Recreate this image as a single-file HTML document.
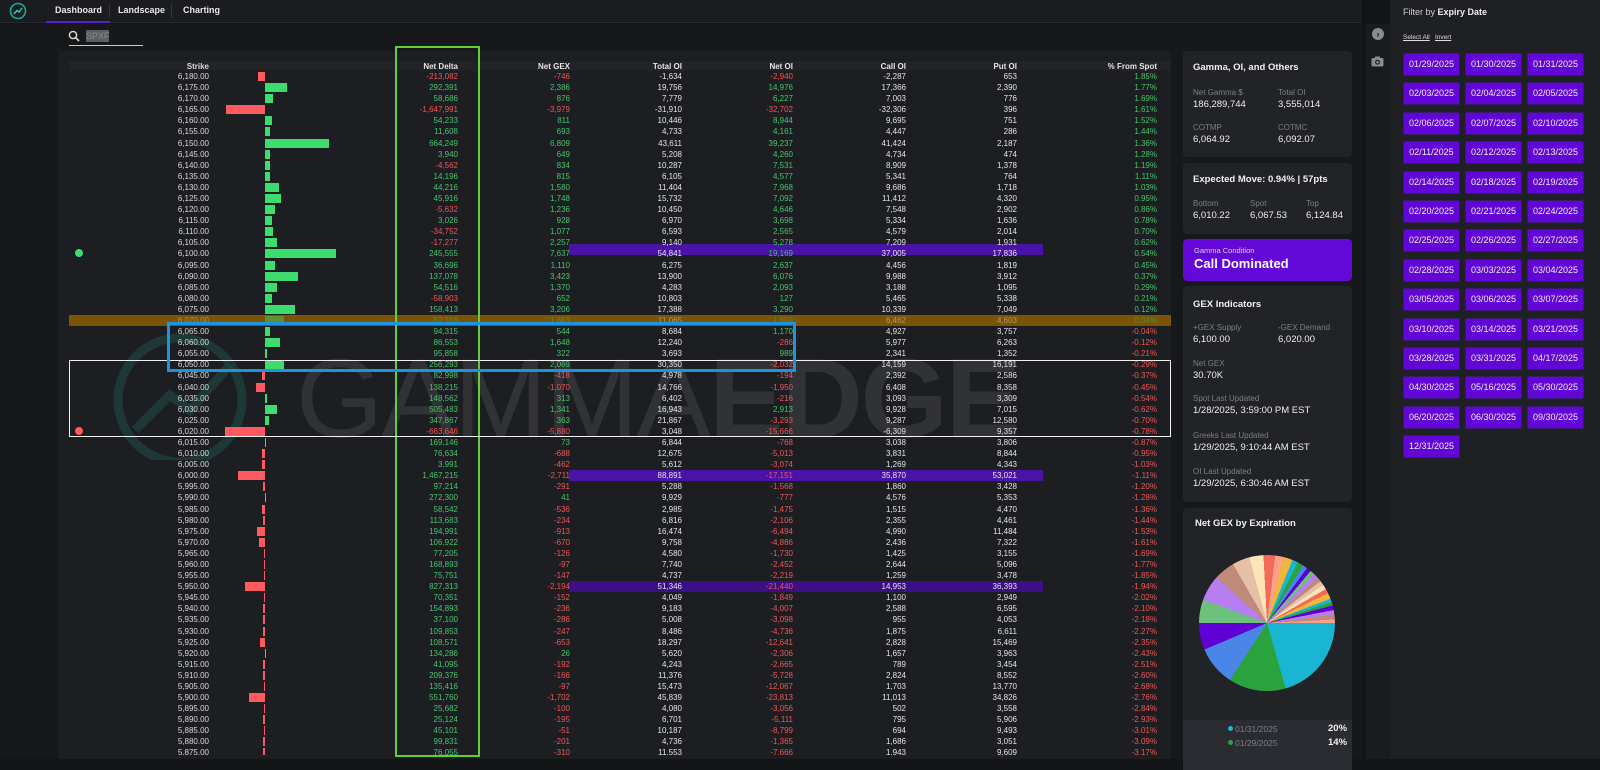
<!DOCTYPE html>
<html><head><meta charset="utf-8"><style>
*{margin:0;padding:0;box-sizing:border-box}
body{width:1600px;height:759px;overflow:hidden;background:#131416;font-family:"Liberation Sans",sans-serif;color:#e6e6e6;position:relative}
.abs{position:absolute}
#nav{left:0;top:0;width:1362px;height:23px;background:#1b1c1f;border-bottom:1px solid #2a2b2f}
#nav span{position:absolute;top:5px;font-size:9px;font-weight:bold;color:#e8e8e8}
#side{left:0;top:24px;width:46px;height:735px;background:#17181b}
#main{left:46px;top:24px;width:1316px;height:735px;background:#17181a}
#panel{left:59px;top:51px;width:1112px;height:708px;background:#1d1e22}
.r{position:absolute;left:0;width:1600px;height:11.09px;font-size:8px;line-height:11px}
.r a{position:absolute;text-align:right;color:#e4e4e4;width:100px}
.r a:nth-of-type(1){left:109px;color:#d8d8d8}
.r a:nth-of-type(2){left:358px}
.r a:nth-of-type(3){left:470px}
.r a:nth-of-type(4){left:582px}
.r a:nth-of-type(5){left:693px}
.r a:nth-of-type(6){left:806px}
.r a:nth-of-type(7){left:917px}
.r a:nth-of-type(8){left:1057px}
.r a.n{color:#f05656}.r a.p{color:#42c66a}
.r u{position:absolute;left:265px;top:1px;height:9px;background:#3ddc6f}
.r u.n{background:#ff5a5f;transform:translateX(-100%)}
.r i{position:absolute;top:0;height:11.09px}
.card{position:absolute;left:1183px;width:169px;background:#222327;border-radius:4px}
.lb{position:absolute;font-size:8px;color:#7d7f86}
.vl{position:absolute;font-size:9.5px;color:#eee}
.ct{position:absolute;font-size:9.5px;font-weight:bold;color:#f0f0f0}
#filt{left:1390px;top:0;width:210px;height:759px;background:#1f2023}
.btn{position:absolute;width:57px;height:23px;background:#6106d6;border:1px solid #3a1a70;border-radius:2px;color:#f2ecff;font-size:9px;line-height:21px;text-align:center}
</style></head><body>
<div id="nav" class="abs">
<svg class="abs" style="left:9px;top:2px" width="18" height="18" viewBox="0 0 18 18"><circle cx="9" cy="9" r="7.5" fill="none" stroke="#17a89a" stroke-width="1.6"/><path d="M5 12 L8 8.5 L10 10 L13 6" fill="none" stroke="#35d0c0" stroke-width="1.4"/></svg>
<span style="left:55px">Dashboard</span>
<div class="abs" style="left:109px;top:4px;width:1px;height:14px;background:#34353a"></div>
<span style="left:118px">Landscape</span>
<div class="abs" style="left:171px;top:4px;width:1px;height:14px;background:#34353a"></div>
<span style="left:183px">Charting</span>
<div class="abs" style="left:46px;top:21px;width:64px;height:2px;background:#5a1fd0"></div>
</div>
<div id="side" class="abs"></div>
<div id="main" class="abs"></div>
<svg class="abs" style="left:68px;top:30px" width="12" height="12" viewBox="0 0 12 12"><circle cx="5" cy="5" r="3.6" fill="none" stroke="#ddd" stroke-width="1.4"/><path d="M7.6 7.6L11 11" stroke="#ddd" stroke-width="1.6"/></svg>
<div class="abs" style="left:86px;top:30px;width:23px;height:12px;background:#5b5d63;font-size:9px;color:#8a8c92;line-height:12px">SPXF</div>
<div class="abs" style="left:69px;top:45px;width:74px;height:1px;background:#ccc"></div>
<div id="panel" class="abs"></div>
<div class="abs" style="left:69px;top:61px;width:1102px;height:10px;background:#222327"></div>
<!-- watermark -->
<svg class="abs" style="left:90px;top:330px" width="180" height="130" viewBox="0 0 180 130"><circle cx="90" cy="70" r="62" fill="none" stroke="#1f4a48" stroke-width="9" opacity=".6"/><path d="M45 100 L80 65 L100 80 L140 35" fill="none" stroke="#1f4a48" stroke-width="9" opacity=".6"/></svg>
<div class="abs" style="left:296px;top:343px;font-size:112px;line-height:112px;color:rgba(255,255,255,.09);letter-spacing:-2px;white-space:nowrap"><span style="font-weight:normal">GAMMA</span><span style="font-weight:bold">EDGE</span></div>
<!-- header -->
<div class="r" style="top:61px;font-weight:bold"><a>Strike</a><a>Net Delta</a><a>Net GEX</a><a>Total OI</a><a>Net OI</a><a>Call OI</a><a>Put OI</a><a>% From Spot</a></div>
<!-- highlights -->
<div class="abs" style="left:569px;top:243.5px;width:474px;height:11px;background:#4a12a6"></div>
<div class="abs" style="left:69px;top:315px;width:1102px;height:11px;background:#7a5504"></div>
<div class="abs" style="left:569px;top:470.2px;width:474px;height:11px;background:#4a12a6"></div>
<div class="abs" style="left:569px;top:581.1px;width:474px;height:11px;background:#3c0f86"></div>
<div id="rows" class="abs" style="left:0;top:71px;width:1600px">
<div class="r" style="top:0px"><a>6,180.00</a><u class="n" style="width:7px"></u><a class="n">-213,082</a><a class="n">-746</a><a>-1,634</a><a class="n">-2,940</a><a>-2,287</a><a>653</a><a class="p">1.85%</a></div>
<div class="r" style="top:11.09px"><a>6,175.00</a><u style="width:22px"></u><a class="p">292,391</a><a class="p">2,386</a><a>19,756</a><a class="p">14,976</a><a>17,366</a><a>2,390</a><a class="p">1.77%</a></div>
<div class="r" style="top:22.18px"><a>6,170.00</a><u style="width:8px"></u><a class="p">58,686</a><a class="p">876</a><a>7,779</a><a class="p">6,227</a><a>7,003</a><a>776</a><a class="p">1.69%</a></div>
<div class="r" style="top:33.27px"><a>6,165.00</a><u class="n" style="width:39px"></u><a class="n">-1,647,991</a><a class="n">-3,979</a><a>-31,910</a><a class="n">-32,702</a><a>-32,306</a><a>396</a><a class="p">1.61%</a></div>
<div class="r" style="top:44.36px"><a>6,160.00</a><u style="width:7px"></u><a class="p">54,233</a><a class="p">811</a><a>10,446</a><a class="p">8,944</a><a>9,695</a><a>751</a><a class="p">1.52%</a></div>
<div class="r" style="top:55.45px"><a>6,155.00</a><u style="width:5px"></u><a class="p">11,608</a><a class="p">693</a><a>4,733</a><a class="p">4,161</a><a>4,447</a><a>286</a><a class="p">1.44%</a></div>
<div class="r" style="top:66.54px"><a>6,150.00</a><u style="width:64px"></u><a class="p">664,249</a><a class="p">6,809</a><a>43,611</a><a class="p">39,237</a><a>41,424</a><a>2,187</a><a class="p">1.36%</a></div>
<div class="r" style="top:77.63px"><a>6,145.00</a><u style="width:5px"></u><a class="p">3,940</a><a class="p">649</a><a>5,208</a><a class="p">4,260</a><a>4,734</a><a>474</a><a class="p">1.28%</a></div>
<div class="r" style="top:88.72px"><a>6,140.00</a><u style="width:5px"></u><a class="n">-4,562</a><a class="p">834</a><a>10,287</a><a class="p">7,531</a><a>8,909</a><a>1,378</a><a class="p">1.19%</a></div>
<div class="r" style="top:99.81px"><a>6,135.00</a><u style="width:5px"></u><a class="p">14,196</a><a class="p">815</a><a>6,105</a><a class="p">4,577</a><a>5,341</a><a>764</a><a class="p">1.11%</a></div>
<div class="r" style="top:110.9px"><a>6,130.00</a><u style="width:14px"></u><a class="p">44,216</a><a class="p">1,580</a><a>11,404</a><a class="p">7,968</a><a>9,686</a><a>1,718</a><a class="p">1.03%</a></div>
<div class="r" style="top:121.99px"><a>6,125.00</a><u style="width:16px"></u><a class="p">45,916</a><a class="p">1,748</a><a>15,732</a><a class="p">7,092</a><a>11,412</a><a>4,320</a><a class="p">0.95%</a></div>
<div class="r" style="top:133.08px"><a>6,120.00</a><u style="width:10px"></u><a class="n">-5,632</a><a class="p">1,236</a><a>10,450</a><a class="p">4,646</a><a>7,548</a><a>2,902</a><a class="p">0.86%</a></div>
<div class="r" style="top:144.17px"><a>6,115.00</a><u style="width:7px"></u><a class="p">3,026</a><a class="p">928</a><a>6,970</a><a class="p">3,698</a><a>5,334</a><a>1,636</a><a class="p">0.78%</a></div>
<div class="r" style="top:155.26px"><a>6,110.00</a><u style="width:8px"></u><a class="n">-34,752</a><a class="p">1,077</a><a>6,593</a><a class="p">2,565</a><a>4,579</a><a>2,014</a><a class="p">0.70%</a></div>
<div class="r" style="top:166.35px"><a>6,105.00</a><u style="width:12px"></u><a class="n">-17,277</a><a class="p">2,257</a><a>9,140</a><a class="p">5,278</a><a>7,209</a><a>1,931</a><a class="p">0.62%</a></div>
<div class="r" style="top:177.44px"><a>6,100.00</a><u style="width:71px"></u><a class="p">245,555</a><a class="p">7,637</a><a>54,841</a><a class="p">19,169</a><a>37,005</a><a>17,836</a><a class="p">0.54%</a></div>
<div class="r" style="top:188.53px"><a>6,095.00</a><u style="width:10px"></u><a class="p">36,696</a><a class="p">1,110</a><a>6,275</a><a class="p">2,637</a><a>4,456</a><a>1,819</a><a class="p">0.45%</a></div>
<div class="r" style="top:199.62px"><a>6,090.00</a><u style="width:33px"></u><a class="p">137,078</a><a class="p">3,423</a><a>13,900</a><a class="p">6,076</a><a>9,988</a><a>3,912</a><a class="p">0.37%</a></div>
<div class="r" style="top:210.71px"><a>6,085.00</a><u style="width:12px"></u><a class="p">54,516</a><a class="p">1,370</a><a>4,283</a><a class="p">2,093</a><a>3,188</a><a>1,095</a><a class="p">0.29%</a></div>
<div class="r" style="top:221.8px"><a>6,080.00</a><u style="width:7px"></u><a class="n">-58,903</a><a class="p">652</a><a>10,803</a><a class="p">127</a><a>5,465</a><a>5,338</a><a class="p">0.21%</a></div>
<div class="r" style="top:232.89px"><a>6,075.00</a><u style="width:30px"></u><a class="p">158,413</a><a class="p">3,206</a><a>17,388</a><a class="p">3,290</a><a>10,339</a><a>7,049</a><a class="p">0.12%</a></div>
<div class="r" style="top:243.98px;opacity:.45"><a>6,070.00</a><u style="width:19px"></u><a class="p">62,316</a><a class="p">1,863</a><a>11,065</a><a class="p">1,859</a><a style="opacity:2">6,462</a><a>4,603</a><a class="p">0.04%</a></div>
<div class="r" style="top:255.07px"><a>6,065.00</a><u style="width:5px"></u><a class="p">94,315</a><a class="p">544</a><a>8,684</a><a class="p">1,170</a><a>4,927</a><a>3,757</a><a class="n">-0.04%</a></div>
<div class="r" style="top:266.16px"><a>6,060.00</a><u style="width:15px"></u><a class="p">86,553</a><a class="p">1,648</a><a>12,240</a><a class="n">-286</a><a>5,977</a><a>6,263</a><a class="n">-0.12%</a></div>
<div class="r" style="top:277.25px"><a>6,055.00</a><u style="width:2px"></u><a class="p">95,858</a><a class="p">322</a><a>3,693</a><a class="p">989</a><a>2,341</a><a>1,352</a><a class="n">-0.21%</a></div>
<div class="r" style="top:288.34px"><a>6,050.00</a><u style="width:19px"></u><a class="p">256,293</a><a class="p">2,069</a><a>30,350</a><a class="n">-2,032</a><a>14,159</a><a>16,191</a><a class="n">-0.29%</a></div>
<div class="r" style="top:299.43px"><a>6,045.00</a><u class="n" style="width:3px"></u><a class="p">82,998</a><a class="n">-418</a><a>4,978</a><a class="n">-194</a><a>2,392</a><a>2,586</a><a class="n">-0.37%</a></div>
<div class="r" style="top:310.52px"><a>6,040.00</a><u class="n" style="width:9px"></u><a class="p">138,215</a><a class="n">-1,070</a><a>14,766</a><a class="n">-1,950</a><a>6,408</a><a>8,358</a><a class="n">-0.45%</a></div>
<div class="r" style="top:321.61px"><a>6,035.00</a><u style="width:2px"></u><a class="p">148,562</a><a class="p">313</a><a>6,402</a><a class="n">-216</a><a>3,093</a><a>3,309</a><a class="n">-0.54%</a></div>
<div class="r" style="top:332.7px"><a>6,030.00</a><u style="width:12px"></u><a class="p">505,483</a><a class="p">1,341</a><a>16,943</a><a class="p">2,913</a><a>9,928</a><a>7,015</a><a class="n">-0.62%</a></div>
<div class="r" style="top:343.79px"><a>6,025.00</a><u style="width:4px"></u><a class="p">347,867</a><a class="p">363</a><a>21,867</a><a class="n">-3,293</a><a>9,287</a><a>12,580</a><a class="n">-0.70%</a></div>
<div class="r" style="top:354.88px"><a>6,020.00</a><u class="n" style="width:40px"></u><a class="n">-663,646</a><a class="n">-5,880</a><a>3,048</a><a class="n">-15,666</a><a>-6,309</a><a>9,357</a><a class="n">-0.78%</a></div>
<div class="r" style="top:365.97px"><a>6,015.00</a><u style="width:1px"></u><a class="p">169,146</a><a class="p">73</a><a>6,844</a><a class="n">-768</a><a>3,038</a><a>3,806</a><a class="n">-0.87%</a></div>
<div class="r" style="top:377.06px"><a>6,010.00</a><u class="n" style="width:3px"></u><a class="p">76,634</a><a class="n">-688</a><a>12,675</a><a class="n">-5,013</a><a>3,831</a><a>8,844</a><a class="n">-0.95%</a></div>
<div class="r" style="top:388.15px"><a>6,005.00</a><u class="n" style="width:3px"></u><a class="p">3,991</a><a class="n">-462</a><a>5,612</a><a class="n">-3,074</a><a>1,269</a><a>4,343</a><a class="n">-1.03%</a></div>
<div class="r" style="top:399.24px"><a>6,000.00</a><u class="n" style="width:27px"></u><a class="p">1,467,215</a><a class="n">-2,711</a><a>88,891</a><a class="n">-17,151</a><a>35,870</a><a>53,021</a><a class="n">-1.11%</a></div>
<div class="r" style="top:410.33px"><a>5,995.00</a><u class="n" style="width:2px"></u><a class="p">97,214</a><a class="n">-291</a><a>5,288</a><a class="n">-1,568</a><a>1,860</a><a>3,428</a><a class="n">-1.20%</a></div>
<div class="r" style="top:421.42px"><a>5,990.00</a><u style="width:1px"></u><a class="p">272,300</a><a class="p">41</a><a>9,929</a><a class="n">-777</a><a>4,576</a><a>5,353</a><a class="n">-1.28%</a></div>
<div class="r" style="top:432.51px"><a>5,985.00</a><u class="n" style="width:3px"></u><a class="p">58,542</a><a class="n">-536</a><a>2,985</a><a class="n">-1,475</a><a>1,515</a><a>4,470</a><a class="n">-1.36%</a></div>
<div class="r" style="top:443.6px"><a>5,980.00</a><u class="n" style="width:2px"></u><a class="p">113,683</a><a class="n">-234</a><a>6,816</a><a class="n">-2,106</a><a>2,355</a><a>4,461</a><a class="n">-1.44%</a></div>
<div class="r" style="top:454.69px"><a>5,975.00</a><u class="n" style="width:8px"></u><a class="p">194,991</a><a class="n">-913</a><a>16,474</a><a class="n">-6,494</a><a>4,990</a><a>11,484</a><a class="n">-1.53%</a></div>
<div class="r" style="top:465.78px"><a>5,970.00</a><u class="n" style="width:6px"></u><a class="p">106,922</a><a class="n">-670</a><a>9,758</a><a class="n">-4,886</a><a>2,436</a><a>7,322</a><a class="n">-1.61%</a></div>
<div class="r" style="top:476.87px"><a>5,965.00</a><u class="n" style="width:1px"></u><a class="p">77,205</a><a class="n">-126</a><a>4,580</a><a class="n">-1,730</a><a>1,425</a><a>3,155</a><a class="n">-1.69%</a></div>
<div class="r" style="top:487.96px"><a>5,960.00</a><u class="n" style="width:1px"></u><a class="p">168,893</a><a class="n">-97</a><a>7,740</a><a class="n">-2,452</a><a>2,644</a><a>5,096</a><a class="n">-1.77%</a></div>
<div class="r" style="top:499.05px"><a>5,955.00</a><u class="n" style="width:1px"></u><a class="p">75,751</a><a class="n">-147</a><a>4,737</a><a class="n">-2,219</a><a>1,259</a><a>3,478</a><a class="n">-1.85%</a></div>
<div class="r" style="top:510.14px"><a>5,950.00</a><u class="n" style="width:20px"></u><a class="p">827,313</a><a class="n">-2,194</a><a>51,346</a><a class="n">-21,440</a><a>14,953</a><a>36,393</a><a class="n">-1.94%</a></div>
<div class="r" style="top:521.23px"><a>5,945.00</a><u class="n" style="width:1px"></u><a class="p">70,351</a><a class="n">-152</a><a>4,049</a><a class="n">-1,849</a><a>1,100</a><a>2,949</a><a class="n">-2.02%</a></div>
<div class="r" style="top:532.32px"><a>5,940.00</a><u class="n" style="width:2px"></u><a class="p">154,893</a><a class="n">-236</a><a>9,183</a><a class="n">-4,007</a><a>2,588</a><a>6,595</a><a class="n">-2.10%</a></div>
<div class="r" style="top:543.41px"><a>5,935.00</a><u class="n" style="width:2px"></u><a class="p">37,100</a><a class="n">-286</a><a>5,008</a><a class="n">-3,098</a><a>955</a><a>4,053</a><a class="n">-2.18%</a></div>
<div class="r" style="top:554.5px"><a>5,930.00</a><u class="n" style="width:2px"></u><a class="p">109,853</a><a class="n">-247</a><a>8,486</a><a class="n">-4,736</a><a>1,875</a><a>6,611</a><a class="n">-2.27%</a></div>
<div class="r" style="top:565.59px"><a>5,925.00</a><u class="n" style="width:5px"></u><a class="p">108,571</a><a class="n">-653</a><a>18,297</a><a class="n">-12,641</a><a>2,828</a><a>15,469</a><a class="n">-2.35%</a></div>
<div class="r" style="top:576.68px"><a>5,920.00</a><u style="width:1px"></u><a class="p">134,286</a><a class="p">26</a><a>5,620</a><a class="n">-2,306</a><a>1,657</a><a>3,963</a><a class="n">-2.43%</a></div>
<div class="r" style="top:587.77px"><a>5,915.00</a><u class="n" style="width:2px"></u><a class="p">41,095</a><a class="n">-192</a><a>4,243</a><a class="n">-2,665</a><a>789</a><a>3,454</a><a class="n">-2.51%</a></div>
<div class="r" style="top:598.86px"><a>5,910.00</a><u class="n" style="width:2px"></u><a class="p">209,376</a><a class="n">-166</a><a>11,376</a><a class="n">-5,728</a><a>2,824</a><a>8,552</a><a class="n">-2.60%</a></div>
<div class="r" style="top:609.95px"><a>5,905.00</a><u class="n" style="width:1px"></u><a class="p">135,416</a><a class="n">-97</a><a>15,473</a><a class="n">-12,067</a><a>1,703</a><a>13,770</a><a class="n">-2.68%</a></div>
<div class="r" style="top:621.04px"><a>5,900.00</a><u class="n" style="width:16px"></u><a class="p">551,760</a><a class="n">-1,702</a><a>45,839</a><a class="n">-23,813</a><a>11,013</a><a>34,826</a><a class="n">-2.76%</a></div>
<div class="r" style="top:632.13px"><a>5,895.00</a><u class="n" style="width:1px"></u><a class="p">25,682</a><a class="n">-100</a><a>4,080</a><a class="n">-3,056</a><a>502</a><a>3,558</a><a class="n">-2.84%</a></div>
<div class="r" style="top:643.22px"><a>5,890.00</a><u class="n" style="width:2px"></u><a class="p">25,124</a><a class="n">-195</a><a>6,701</a><a class="n">-5,111</a><a>795</a><a>5,906</a><a class="n">-2.93%</a></div>
<div class="r" style="top:654.31px"><a>5,885.00</a><u class="n" style="width:1px"></u><a class="p">45,101</a><a class="n">-51</a><a>10,187</a><a class="n">-8,799</a><a>694</a><a>9,493</a><a class="n">-3.01%</a></div>
<div class="r" style="top:665.4px"><a>5,880.00</a><u class="n" style="width:2px"></u><a class="p">99,831</a><a class="n">-201</a><a>4,736</a><a class="n">-1,365</a><a>1,686</a><a>3,051</a><a class="n">-3.09%</a></div>
<div class="r" style="top:676.49px;height:8px;overflow:hidden"><a>5,875.00</a><u class="n" style="width:2px"></u><a class="p">76,055</a><a class="n">-310</a><a>11,553</a><a class="n">-7,666</a><a>1,943</a><a>9,609</a><a class="n">-3.17%</a></div>
</div>
<!-- dots -->
<div class="abs" style="left:75px;top:249px;width:8px;height:8px;border-radius:50%;background:#3ddc6f"></div>
<div class="abs" style="left:75px;top:427px;width:8px;height:8px;border-radius:50%;background:#ff5a5f"></div>
<!-- boxes -->
<div class="abs" style="left:395px;top:46px;width:85px;height:711px;border:2px solid #5fcf3a"></div>
<div class="abs" style="left:69px;top:360px;width:1102px;height:77px;border:1px solid #f0f0f0"></div>
<div class="abs" style="left:167px;top:322px;width:629px;height:50px;border:3px solid #1f93dd"></div>
<!-- right cards -->
<div class="card" style="top:51px;height:106px">
<div class="ct" style="left:10px;top:11px">Gamma, OI, and Others</div>
<div class="lb" style="left:10px;top:37px">Net Gamma $</div><div class="vl" style="left:10px;top:48px">186,289,744</div>
<div class="lb" style="left:95px;top:37px">Total OI</div><div class="vl" style="left:95px;top:48px">3,555,014</div>
<div class="lb" style="left:10px;top:72px">COTMP</div><div class="vl" style="left:10px;top:83px">6,064.92</div>
<div class="lb" style="left:95px;top:72px">COTMC</div><div class="vl" style="left:95px;top:83px">6,092.07</div>
</div>
<div class="card" style="top:163px;height:71px">
<div class="ct" style="left:10px;top:11px">Expected Move: 0.94% | 57pts</div>
<div class="lb" style="left:10px;top:36px">Bottom</div><div class="vl" style="left:10px;top:47px">6,010.22</div>
<div class="lb" style="left:67px;top:36px">Spot</div><div class="vl" style="left:67px;top:47px">6,067.53</div>
<div class="lb" style="left:123px;top:36px">Top</div><div class="vl" style="left:123px;top:47px">6,124.84</div>
</div>
<div class="card" style="top:239px;height:42px;background:#6408d8">
<div class="lb" style="left:11px;top:7px;color:#dccdf8;font-size:7.5px">Gamma Condition</div>
<div class="abs" style="left:11px;top:17px;font-size:13px;font-weight:bold;color:#fff">Call Dominated</div>
</div>
<div class="card" style="top:286px;height:216px">
<div class="ct" style="left:10px;top:13px">GEX Indicators</div>
<div class="lb" style="left:10px;top:37px">+GEX Supply</div><div class="vl" style="left:10px;top:48px">6,100.00</div>
<div class="lb" style="left:95px;top:37px">-GEX Demand</div><div class="vl" style="left:95px;top:48px">6,020.00</div>
<div class="lb" style="left:10px;top:73px">Net GEX</div><div class="vl" style="left:10px;top:84px">30.70K</div>
<div class="lb" style="left:10px;top:108px">Spot Last Updated</div><div class="vl" style="left:10px;top:119px">1/28/2025, 3:59:00 PM EST</div>
<div class="lb" style="left:10px;top:145px">Greeks Last Updated</div><div class="vl" style="left:10px;top:156px">1/29/2025, 9:10:44 AM EST</div>
<div class="lb" style="left:10px;top:181px">OI Last Updated</div><div class="vl" style="left:10px;top:192px">1/29/2025, 6:30:46 AM EST</div>
</div>
<div class="card" style="top:508px;height:260px">
<div class="ct" style="left:12px;top:10px">Net GEX by Expiration</div>
<div class="abs" style="left:16px;top:47px;width:136px;height:136px;border-radius:50%;background:conic-gradient(from 90deg,#1ab5d3 0 74deg,#2aa33e 74deg 123deg,#4a86e8 123deg 157deg,#6000d6 157deg 180deg,#6cc27c 180deg 200deg,#b67ef0 200deg 222deg,#c08a7a 222deg 240deg,#e6c0a6 240deg 255deg,#fde3b8 255deg 267deg,#f36a58 267deg 277deg,#f9a08a 277deg 284deg,#f3b53a 284deg 292deg,#1ab5d3 292deg 297deg,#2aa33e 297deg 302deg,#4a86e8 302deg 306deg,#6000d6 306deg 310deg,#6cc27c 310deg 314deg,#b67ef0 314deg 318deg,#c08a7a 318deg 322deg,#e6c0a6 322deg 326deg,#fde3b8 326deg 330deg,#f36a58 330deg 334deg,#f3b53a 334deg 339deg,#1ab5d3 339deg 342deg,#2aa33e 342deg 345deg,#6000d6 345deg 349deg,#b67ef0 349deg 353deg,#c08a7a 353deg 357deg,#f9a08a 357deg 360deg)"></div>
<div class="abs" style="left:0;top:212px;width:169px;height:50px;background:#2a2c32"></div>
<div class="abs" style="left:45px;top:218px;width:5px;height:5px;border-radius:50%;background:#1ab5d3"></div>
<div class="lb" style="left:52px;top:216px;font-size:8.5px">01/31/2025</div>
<div class="vl" style="left:145px;top:215px;font-weight:bold">20%</div>
<div class="abs" style="left:45px;top:232px;width:5px;height:5px;border-radius:50%;background:#2aa33e"></div>
<div class="lb" style="left:52px;top:230px;font-size:8.5px">01/29/2025</div>
<div class="vl" style="left:145px;top:229px;font-weight:bold">14%</div>
</div>
<!-- icon column -->
<div class="abs" style="left:1366px;top:24px;width:24px;height:735px;background:#1a1b1e"></div>
<div class="abs" style="left:1372px;top:28px;width:12px;height:12px;border-radius:50%;background:#8a8b90;color:#1a1b1e;font-size:9px;line-height:12px;text-align:center;font-weight:bold">›</div>
<svg class="abs" style="left:1371px;top:56px" width="13" height="11" viewBox="0 0 13 11"><rect x="0.5" y="2" width="12" height="8.5" rx="1.5" fill="#8a8b90"/><rect x="4" y="0.5" width="5" height="2.5" fill="#8a8b90"/><circle cx="6.5" cy="6.2" r="2.4" fill="#1a1b1e"/><circle cx="6.5" cy="6.2" r="1.3" fill="#8a8b90"/></svg>
<!-- filter sidebar -->
<div id="filt" class="abs">
<div class="abs" style="left:13px;top:7px;font-size:9px;color:#cfcfd4">Filter by <b style="color:#eee">Expiry Date</b></div>
<div class="abs" style="left:13px;top:34px;font-size:6.5px;color:#ddd;text-decoration:underline">Select All</div>
<div class="abs" style="left:45px;top:34px;font-size:6.5px;color:#ddd;text-decoration:underline">Invert</div>
<div class="btn" style="left:13px;top:53px">01/29/2025</div><div class="btn" style="left:75px;top:53px">01/30/2025</div><div class="btn" style="left:137px;top:53px">01/31/2025</div>
<div class="btn" style="left:13px;top:82.4px">02/03/2025</div><div class="btn" style="left:75px;top:82.4px">02/04/2025</div><div class="btn" style="left:137px;top:82.4px">02/05/2025</div>
<div class="btn" style="left:13px;top:111.8px">02/06/2025</div><div class="btn" style="left:75px;top:111.8px">02/07/2025</div><div class="btn" style="left:137px;top:111.8px">02/10/2025</div>
<div class="btn" style="left:13px;top:141.2px">02/11/2025</div><div class="btn" style="left:75px;top:141.2px">02/12/2025</div><div class="btn" style="left:137px;top:141.2px">02/13/2025</div>
<div class="btn" style="left:13px;top:170.6px">02/14/2025</div><div class="btn" style="left:75px;top:170.6px">02/18/2025</div><div class="btn" style="left:137px;top:170.6px">02/19/2025</div>
<div class="btn" style="left:13px;top:200px">02/20/2025</div><div class="btn" style="left:75px;top:200px">02/21/2025</div><div class="btn" style="left:137px;top:200px">02/24/2025</div>
<div class="btn" style="left:13px;top:229.4px">02/25/2025</div><div class="btn" style="left:75px;top:229.4px">02/26/2025</div><div class="btn" style="left:137px;top:229.4px">02/27/2025</div>
<div class="btn" style="left:13px;top:258.8px">02/28/2025</div><div class="btn" style="left:75px;top:258.8px">03/03/2025</div><div class="btn" style="left:137px;top:258.8px">03/04/2025</div>
<div class="btn" style="left:13px;top:288.2px">03/05/2025</div><div class="btn" style="left:75px;top:288.2px">03/06/2025</div><div class="btn" style="left:137px;top:288.2px">03/07/2025</div>
<div class="btn" style="left:13px;top:317.6px">03/10/2025</div><div class="btn" style="left:75px;top:317.6px">03/14/2025</div><div class="btn" style="left:137px;top:317.6px">03/21/2025</div>
<div class="btn" style="left:13px;top:347px">03/28/2025</div><div class="btn" style="left:75px;top:347px">03/31/2025</div><div class="btn" style="left:137px;top:347px">04/17/2025</div>
<div class="btn" style="left:13px;top:376.4px">04/30/2025</div><div class="btn" style="left:75px;top:376.4px">05/16/2025</div><div class="btn" style="left:137px;top:376.4px">05/30/2025</div>
<div class="btn" style="left:13px;top:405.8px">06/20/2025</div><div class="btn" style="left:75px;top:405.8px">06/30/2025</div><div class="btn" style="left:137px;top:405.8px">09/30/2025</div>
<div class="btn" style="left:13px;top:435.2px">12/31/2025</div>
</div>
</body></html>
